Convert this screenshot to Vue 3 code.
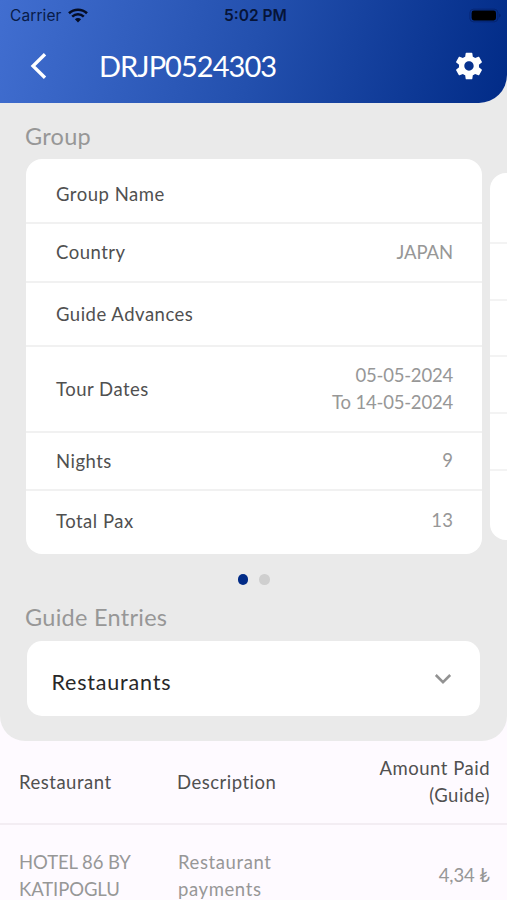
<script setup>
const details = [
  { label: 'Group Name', lines: [], size: 'first' },
  { label: 'Country', lines: ['JAPAN'], size: 'short', kind: 'word' },
  { label: 'Guide Advances', lines: [], size: 'medium' },
  { label: 'Tour Dates', lines: ['05-05-2024', 'To 14-05-2024'], size: 'tall', kind: 'date' },
  { label: 'Nights', lines: ['9'], size: 'short' },
  { label: 'Total Pax', lines: ['13'], size: 'last' }
]
</script>

<template>
  <div class="screen">
    <header class="header">
      <div class="status">
        <div class="carrier">
          <span>Carrier</span>
          <svg class="wifi" width="20" height="15" viewBox="0 0 20 15" fill="none" stroke="#050d24">
            <path d="M1 5.3C6.1.5 13.9.5 19 5.3" stroke-width="2.6" />
            <path d="M4.2 8.6c3.3-3.1 8.3-3.1 11.6 0" stroke-width="2.5" />
            <path d="M6.9 11.3 10 14.5l3.1-3.2c-1.8-1.6-4.4-1.6-6.2 0z" fill="#050d24" stroke="none" />
          </svg>
        </div>
        <span class="time">5:02 PM</span>
        <svg class="battery" width="32" height="15" viewBox="0 0 32 15">
          <rect x=".9" y="1.2" width="28" height="12.6" rx="3.6" fill="none" stroke="#000a38" stroke-opacity=".3" />
          <rect x="2.6" y="2.6" width="24.4" height="9.8" rx="2.3" fill="#000" />
          <path d="M30.3 5.4v4c1.6-.7 1.6-3.3 0-4z" fill="#000a38" fill-opacity=".4" />
        </svg>
      </div>
      <div class="bar">
        <svg class="back" width="18" height="28" viewBox="0 0 18 28" fill="none" stroke="#fff" stroke-width="3.3">
          <path d="M16 2.2 4 14l12 11.8" />
        </svg>
        <h1 class="title">DRJP0524303</h1>
        <svg class="gear" width="32" height="32" viewBox="0 0 24 24" fill="#fff">
          <path d="M19.43 12.98c.04-.32.07-.64.07-.98s-.03-.66-.07-.98l2.11-1.65c.19-.15.24-.42.12-.64l-2-3.46c-.12-.22-.39-.3-.61-.22l-2.49 1c-.52-.4-1.08-.73-1.69-.98l-.38-2.65C14.46 2.18 14.25 2 14 2h-4c-.25 0-.46.18-.49.42l-.38 2.65c-.61.25-1.17.59-1.69.98l-2.49-1c-.23-.09-.49 0-.61.22l-2 3.46c-.13.22-.07.49.12.64l2.11 1.65c-.04.32-.07.65-.07.98s.03.66.07.98l-2.11 1.65c-.19.15-.24.42-.12.64l2 3.46c.12.22.39.3.61.22l2.49-1c.52.4 1.08.73 1.69.98l.38 2.65c.03.24.24.42.49.42h4c.25 0 .46-.18.49-.42l.38-2.65c.61-.25 1.17-.59 1.69-.98l2.49 1c.23.09.49 0 .61-.22l2-3.46c.12-.22.07-.49-.12-.64l-2.11-1.65zM12 15.5c-1.93 0-3.5-1.57-3.5-3.5s1.57-3.5 3.5-3.5 3.5 1.57 3.5 3.5-1.57 3.5-3.5 3.5z" />
        </svg>
      </div>
    </header>

    <main class="panel">
      <h2 class="heading">Group</h2>
      <div class="carousel">
        <section class="card">
          <div v-for="row in details" :key="row.label" class="row" :class="row.size">
            <span class="label">{{ row.label }}</span>
            <span class="value" :class="row.kind">
              <span v-for="line in row.lines" :key="line" class="line">{{ line }}</span>
            </span>
          </div>
        </section>
        <section class="card next">
          <div v-for="n in 6" :key="n" class="slot"></div>
        </section>
      </div>
      <div class="dots">
        <i class="dot active"></i>
        <i class="dot"></i>
      </div>
      <h2 class="heading entries">Guide Entries</h2>
      <div class="select">
        <span class="chosen">Restaurants</span>
        <svg class="chevron" width="18" height="12" viewBox="0 0 18 12" fill="none" stroke="#929292" stroke-width="2.5">
          <path d="M1.8 2 9 9.2 16.2 2" />
        </svg>
      </div>
    </main>

    <section class="table">
      <div class="record head">
        <span class="c1">Restaurant</span>
        <span class="c2">Description</span>
        <span class="c3">Amount Paid<br />(Guide)</span>
      </div>
      <div class="record body">
        <span class="c1 hotel">HOTEL 86 BY<br />KATIPOGLU</span>
        <span class="c2">Restaurant<br />payments</span>
        <span class="c3 amount">4,34 ₺</span>
      </div>
    </section>
  </div>
</template>

<style>
body {
  margin: 0;
  background: #fefaff;
}
</style>

<style scoped>
.screen {
  width: 507px;
  height: 900px;
  overflow: hidden;
  display: flex;
  flex-direction: column;
  background: #fefaff;
  font-family: Lato, "Noto Sans", sans-serif;
  font-size: 18.5px;
  letter-spacing: 0.5px;
  color: #505050;
  box-sizing: border-box;
}
h1,
h2 {
  margin: 0;
  font-weight: 400;
}
svg {
  display: block;
  flex: none;
}
.header {
  height: 103px;
  flex: none;
  border-bottom-right-radius: 28px;
  background: linear-gradient(104deg, #416ed0 0%, #2350ae 50%, #012b87 100%);
  box-shadow: 28px 0 0 #eaeaea;
}
.status {
  height: 30px;
  display: grid;
  grid-template-columns: 1fr auto 1fr;
  align-items: center;
  padding: 0 6px 0 10px;
  font-family: Inter, sans-serif;
  font-size: 15.5px;
  letter-spacing: 0.1px;
  color: #081b48;
}
.carrier {
  display: flex;
  align-items: center;
  gap: 6px;
}
.time {
  font-weight: 600;
  letter-spacing: 0;
  color: #061438;
}
.battery {
  justify-self: end;
}
.bar {
  height: 72px;
  display: flex;
  align-items: center;
  padding: 0 22.5px 0 29px;
}
.title {
  flex: 1;
  margin-left: 52px;
  color: #fff;
  font-size: 29px;
  line-height: 36px;
  letter-spacing: -0.95px;
}
.panel {
  height: 638px;
  flex: none;
  box-sizing: border-box;
  padding: 17px 0 0 25px;
  background: #eaeaea;
  border-radius: 0 0 25px 25px;
  overflow: hidden;
  display: flex;
  flex-direction: column;
}
.heading {
  height: 32px;
  line-height: 32px;
  font-size: 23.5px;
  letter-spacing: 0.28px;
  color: #979797;
}
.carousel {
  display: flex;
  gap: 8px;
  align-items: center;
  margin: 7px 0 0 1px;
  height: 395px;
}
.card {
  flex: none;
  width: 456px;
  height: 395px;
  background: #fff;
  border-radius: 16px;
  overflow: hidden;
  display: flex;
  flex-direction: column;
}
.row {
  box-sizing: border-box;
  display: flex;
  align-items: center;
  justify-content: space-between;
  padding: 0 29px 0 30px;
  border-bottom: 2px solid #f1f1f1;
}
.first {
  height: 65px;
  padding-top: 6px;
}
.short {
  height: 58.5px;
}
.medium {
  height: 64px;
}
.tall {
  height: 86px;
}
.last {
  height: 63px;
  padding-bottom: 4px;
  border-bottom: 0;
}
.value {
  display: flex;
  flex-direction: column;
  align-items: flex-end;
  color: #979797;
  line-height: 27px;
  letter-spacing: 0.1px;
}
.word {
  letter-spacing: -0.1px;
}
.date {
  letter-spacing: -0.2px;
}
.next {
  height: 367px;
}
.slot {
  box-sizing: border-box;
  flex: none;
  height: 56.7px;
  border-bottom: 2px solid #f3f3f3;
}
.slot:first-child {
  height: 71px;
}
.slot:last-child {
  border-bottom: 0;
}
.dots {
  display: flex;
  justify-content: center;
  gap: 11px;
  margin: 20px 25px 0 0;
}
.dot {
  width: 10.5px;
  height: 10.5px;
  border-radius: 50%;
  background: #cfcfcf;
}
.active {
  background: #012b87;
}
.entries {
  margin-top: 16px;
}
.select {
  width: 453px;
  height: 75px;
  box-sizing: border-box;
  margin: 8px 0 0 2px;
  padding: 0 28.5px 0 24.5px;
  border-radius: 15px;
  background: #fff;
  display: flex;
  align-items: center;
  justify-content: space-between;
}
.chosen {
  padding-top: 7px;
  color: #282828;
  font-size: 21.5px;
  letter-spacing: 0.8px;
}
.chevron {
  margin-top: 1px;
}
.table {
  line-height: 27px;
}
.record {
  box-sizing: border-box;
  display: grid;
  grid-template-columns: 158px 1fr 150px;
  align-items: center;
  padding: 0 17px 0 19px;
}
.head {
  height: 83.5px;
  padding-top: 1px;
  border-bottom: 2px solid #f3edf3;
}
.body {
  height: 102px;
  color: #979797;
}
.body .c2 {
  padding-left: 1px;
  letter-spacing: 0.6px;
}
.body .hotel {
  letter-spacing: -0.1px;
}
.c3 {
  text-align: right;
}
.body .amount {
  letter-spacing: -0.1px;
}
</style>
